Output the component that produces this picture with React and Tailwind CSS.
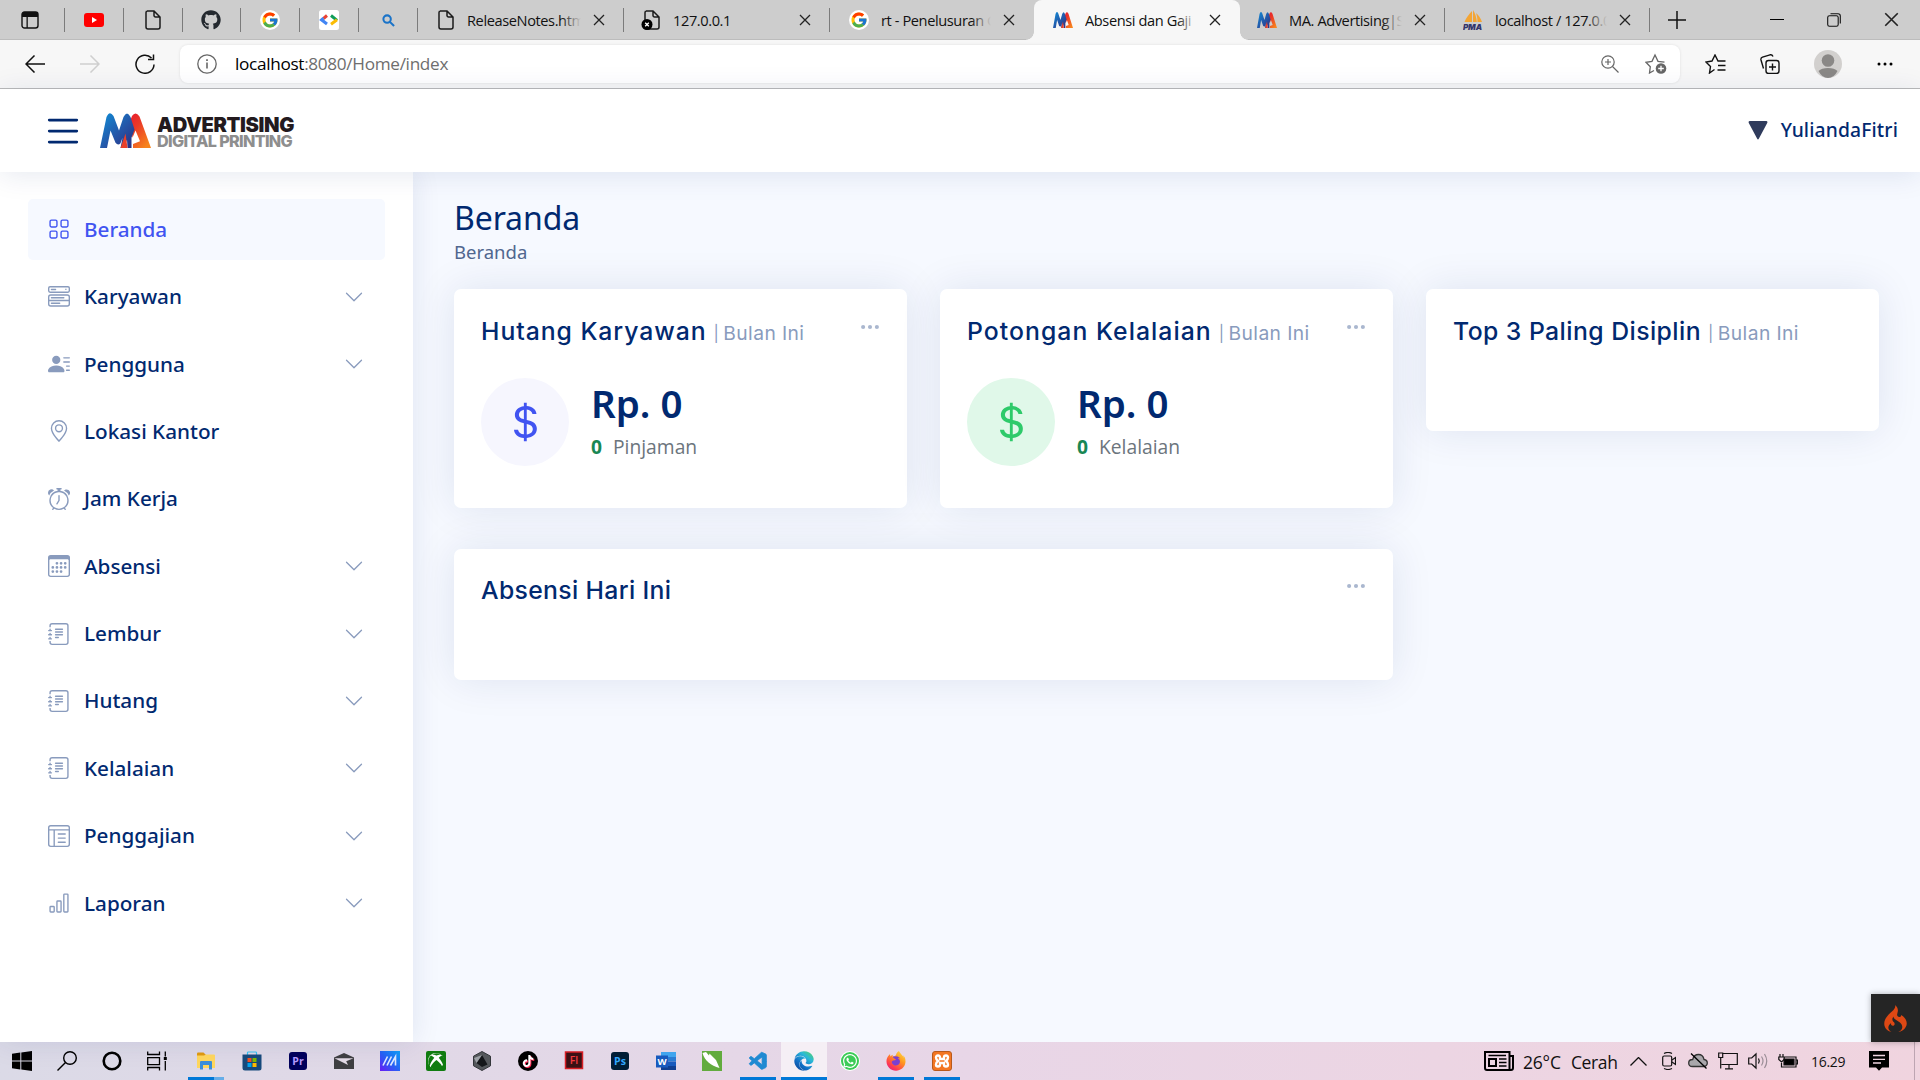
import {
  BsGrid, BsMenuButtonWide, BsPersonLinesFill, BsGeoAlt, BsAlarm, BsCalendar3, BsJournalText,
  BsLayoutTextWindowReverse, BsBarChart, BsChevronDown, BsThreeDots, BsCurrencyDollar, BsList,
} from "react-icons/bs";
import { FcGoogle } from "react-icons/fc";
import { FaGithub, FaWhatsapp, FaXbox, FaEdge, FaFirefoxBrowser, FaTiktok } from "react-icons/fa";
import { SiCodeigniter } from "react-icons/si";
import { VscVscode } from "react-icons/vsc";

/* ---------- Logos ---------- */

function MaMark({ className, id }) {
  return (
    <svg viewBox="0 0 51 34" preserveAspectRatio="none" className={className}>
      <defs>
        <linearGradient id={id + "b"} x1="0" y1="0" x2="1" y2="1">
          <stop offset="0" stopColor="#0f8fd8" />
          <stop offset="0.55" stopColor="#2456a8" />
          <stop offset="1" stopColor="#2b2a7c" />
        </linearGradient>
        <linearGradient id={id + "r"} x1="0" y1="0" x2="0.7" y2="1">
          <stop offset="0" stopColor="#e81c2e" />
          <stop offset="0.4" stopColor="#ea3a28" />
          <stop offset="1" stopColor="#f7841d" />
        </linearGradient>
      </defs>
      <path d="M30 8 32 3Q35.500-2.500 39.500 3.500L51 34H33V30L40 27.500 35.500 17 32.500 24Z" fill={`url(#${id}r)`} />
      <path d="M0 34 6.500 4Q9.500-3 13.500 3L19 17 23.500 4Q27-3 30.500 4L34.500 16 31.500 24V34H27.500L27 26 24.500 33 20.500 34 22.500 24 20.500 29.500Q18 32 15.500 29L10.500 17 7 34Z" fill={`url(#${id}b)`} />
      <path d="M20.500 34 25.500 20 27.500 34Z" fill="#e8402a" />
    </svg>
  );
}

function PageIcon({ error }) {
  return (
    <svg viewBox="0 0 18 20" className="h-5 w-[18px] shrink-0 overflow-visible" fill="none" stroke="#1b1b1b" strokeWidth="1.5">
      <path d="M3 1h7l6 6v10a2 2 0 0 1-2 2H4a2 2 0 0 1-2-2V2.500A1.500 1.500 0 0 1 3.500 1M10 1v4.500A1.500 1.500 0 0 0 11.500 7H16" />
      {error && (
        <>
          <circle cx="4" cy="14.500" r="5.500" fill="#000" stroke="none" />
          <path d="m2.200 12.700 3.600 3.600m0-3.600-3.600 3.600" stroke="#fff" strokeWidth="1.300" />
        </>
      )}
    </svg>
  );
}

const GoogleIcon = () => (
  <span className="flex size-5 shrink-0 items-center justify-center rounded-full bg-white"><FcGoogle size={18} /></span>
);

const PmaIcon = () => (
  <svg viewBox="0 0 20 20" className="-ml-px size-5 shrink-0">
    <path d="M9 12V1C6 4 3 8 1.500 12ZM10 12V0c2 3 3.500 7 3.800 12ZM14.500 12c0-3-.4-6-1.500-9 2.500 2 5 5.500 6 9Z" fill="#f4a534" />
    <text x="0" y="19.500" fontSize="8" fontWeight="900" fontStyle="italic" fontFamily="Inter, sans-serif" fill="#34356b" textLength="19">PMA</text>
  </svg>
);

/* ---------- Browser chrome ---------- */

function CloseX({ className = "size-[12px]" }) {
  return (
    <svg viewBox="0 0 12 12" className={className} stroke="#222" strokeWidth="1.300">
      <path d="m1 1 10 10M11 1 1 11" />
    </svg>
  );
}

const PINNED = [
  <svg viewBox="0 0 18 18" className="size-[18px]"><rect x="1" y="1" width="16" height="16" rx="2.500" fill="none" stroke="#111" strokeWidth="1.400" /><path d="M1 3.500Q1 1 3.500 1h11Q17 1 17 3.500V6H1ZM5.500 6h1.300v11H5.500Z" fill="#111" /></svg>,
  <svg viewBox="0 0 20 14" className="h-[14px] w-5"><rect width="20" height="14" rx="3" fill="#f00" /><path d="M8 4v6l5-3Z" fill="#fff" /></svg>,
  <PageIcon />,
  <FaGithub size={20} color="#24292f" />,
  <GoogleIcon />,
  <svg viewBox="0 0 20 20" className="size-5"><rect width="20" height="20" rx="2.500" fill="#fff" /><g fill="none" strokeWidth="3"><path d="M8 5.500 4.500 8.500" stroke="#ea4335" /><path d="M4.500 8 2.500 9.800 8 14" stroke="#4285f4" /><path d="m12 5.500 6 4.800" stroke="#0f9d58" /><path d="m18 9.800-6 4.400" stroke="#fbbc04" /></g></svg>,
  <svg viewBox="0 0 14 14" className="size-[13px]" fill="none" stroke="#1a73c8" strokeWidth="2.200"><circle cx="5.500" cy="5.500" r="4" /><path d="m8.500 8.500 4.500 4.500" /></svg>,
];

function Tab({ icon, title, active, width, sep = true }) {
  return (
    <div className={"relative flex h-10 shrink-0 items-center pl-[19px] pr-[19px] " + width + (active ? " z-10 rounded-t-lg bg-[#f7f7f7]" : " border-b border-[#bcbcbc]")}>
      {active && <span className="absolute -left-2 bottom-0 size-2 bg-[radial-gradient(circle_at_0_0,#cdcdcd_7.5px,#f7f7f7_8px)]" />}
      {active && <span className="absolute -right-2 bottom-0 size-2 bg-[radial-gradient(circle_at_100%_0,#cdcdcd_7.5px,#f7f7f7_8px)]" />}
      {icon}
      <span className="relative ml-3 flex-1 overflow-hidden whitespace-nowrap text-[14.6px] leading-5 tracking-[-0.4px] text-[#111]">
        {title}
        <span className={"absolute inset-y-0 right-0 w-5 bg-linear-to-r from-transparent " + (active ? "to-[#f7f7f7]" : "to-[#cdcdcd]")} />
      </span>
      <span className="ml-3"><CloseX /></span>
      {sep && <span className="absolute right-0 top-2 h-6 w-px bg-[#7b7b7b]" />}
    </div>
  );
}

function TabStrip() {
  return (
    <div className="flex h-10 bg-[#cdcdcd]">
      <div className="flex w-[418px] shrink-0 border-b border-[#bcbcbc]">
        {PINNED.map((icon, i) => (
          <div key={i} className={"flex h-10 items-center " + (i === 0 ? "w-[65px]" : "w-[59px]")}>
            <span className={"flex flex-1 justify-center " + (i === 0 ? "pr-1" : "")}>{icon}</span>
            <span className="h-6 w-px bg-[#7b7b7b]" />
          </div>
        ))}
      </div>
      <Tab width="w-[206px]" icon={<PageIcon />} title="ReleaseNotes.html" />
      <Tab width="w-[206px]" icon={<PageIcon error />} title="127.0.0.1" />
      <Tab width="w-[204px]" icon={<GoogleIcon />} title="rt - Penelusuran Google" sep={false} />
      <Tab width="w-[206px]" active sep={false} icon={<MaMark id="t1" className="h-4 w-5 shrink-0" />} title="Absensi dan Gaji" />
      <Tab width="w-[205px]" icon={<MaMark id="t2" className="-ml-0.5 h-4 w-5 shrink-0" />} title="MA. Advertising|Sistem" />
      <Tab width="w-[205px]" icon={<PmaIcon />} title="localhost / 127.0.0.1" />
      <div className="flex flex-1 items-center border-b border-[#bcbcbc] pl-[18px] pr-[21px]">
        <svg viewBox="0 0 18 18" className="size-[18px]" stroke="#111" strokeWidth="1.500"><path d="M9 0v18M0 9h18" /></svg>
        <div className="ml-auto flex items-center gap-[43px]">
          <span className="h-px w-[14px] bg-black" />
          <svg viewBox="0 0 14 14" className="size-[14px]" fill="none" stroke="#111" strokeWidth="1.100"><rect x="0.700" y="2.800" width="10.500" height="10.500" rx="1.800" /><path d="M3.500.7h7.500a2.300 2.300 0 0 1 2.300 2.300v7.500" /></svg>
          <CloseX className="size-[15px]" />
        </div>
      </div>
    </div>
  );
}

function Toolbar() {
  return (
    <div className="flex h-[49px] items-center border-b border-[#b9b9b9] bg-[#f7f7f7] pl-[25px] pr-[27px] pb-px">
      <svg viewBox="0 0 20 18" className="h-[18px] w-5" fill="none" stroke="#111" strokeWidth="1.500"><path d="M20 9H1M9.500.5 1 9l8.500 8.500" /></svg>
      <svg viewBox="0 0 20 18" className="ml-[35px] h-[18px] w-5" fill="none" stroke="#cfcfcf" strokeWidth="1.500"><path d="M0 9h19M10.500.5 19 9l-8.500 8.500" /></svg>
      <svg viewBox="0 0 20 20" className="ml-[35px] size-5" fill="none" stroke="#111" strokeWidth="1.500"><path d="M19 10.500A9 9 0 1 1 16.500 4M18.500.5V5.500H13" /></svg>
      <div className="ml-[25px] flex h-[38px] w-[1500px] items-center rounded-lg bg-white pl-[17px] pr-[13px] shadow-[0_0_3px_rgba(0,0,0,0.1)]">
        <svg viewBox="0 0 20 20" className="size-5" fill="none" stroke="#666" strokeWidth="1.300"><circle cx="10" cy="10" r="9.200" /><path d="M10 8.500v6" strokeWidth="1.600" /><path d="M10 5.300v1.700" strokeWidth="1.700" /></svg>
        <span className="ml-[18px] text-[17.2px] leading-6 tracking-[-0.32px] text-[#6e6e6e]"><span className="text-black">localhost</span>:8080/Home/index</span>
        <svg viewBox="0 0 18 18" className="ml-auto size-[18px]" fill="none" stroke="#666" strokeWidth="1.200"><circle cx="7" cy="7" r="6.200" /><path d="m11.500 11.500 6 6M7 4v6M4 7h6" /></svg>
        <svg viewBox="0 0 22 21" className="ml-[26px] h-[21px] w-[22px]" fill="none" stroke="#666" strokeWidth="1.300"><path d="M9 17.500 4.500 20l.8-6.200L1 9.300l6-1L10 2l3 6.300 6.500.9" /><circle cx="16" cy="15.500" r="5.300" fill="#666" stroke="none" /><path d="M16 12.700v5.600m-2.800-2.800h5.600" stroke="#fff" /></svg>
      </div>
      <svg viewBox="0 0 21 20" className="ml-[25px] h-5 w-[21px]" fill="none" stroke="#111" strokeWidth="1.400"><path d="M9.500 15.500 4.500 19l1-6.500L1 8l6-1 3-6 3 6h7.500M13 11.500h7.500M12.500 16h8" /></svg>
      <svg viewBox="0 0 20 20" className="ml-[34px] size-5" fill="none" stroke="#111" strokeWidth="1.400"><rect x="6" y="6.500" width="13" height="13" rx="2.500" /><path d="M12.500 9.500v7M9 13h7M3.500 14.500 1 6Q.5 4 2.500 3.200L10 .8q2-.5 3 1.700" /></svg>
      <svg viewBox="0 0 28 28" className="ml-[34px] size-7"><circle cx="14" cy="14" r="14" fill="#d2d0ce" /><circle cx="14" cy="10.500" r="6.300" fill="#8a8886" /><path d="M4.500 21q3-3 9.500-3t9.500 3q-3.500 7-9.500 7t-9.500-7" fill="#8a8886" /></svg>
      <svg viewBox="0 0 16 4" className="ml-[35px] h-1 w-4"><circle cx="2" cy="2" r="1.500" /><circle cx="8" cy="2" r="1.500" /><circle cx="14" cy="2" r="1.500" /></svg>
    </div>
  );
}

/* ---------- Application ---------- */

function Header() {
  return (
    <header className="relative z-20 flex h-[83px] items-center bg-white pl-[41px] pr-[22px] shadow-[0_3px_27px_rgba(1,41,112,0.1)]">
      <BsList size={44} color="#012970" />
      <MaMark id="h" className="ml-[15px] h-[35px] w-[51px]" />
      <div className="ml-[6px] mt-1 flex flex-col whitespace-nowrap font-[Inter]">
        <span className="text-[20.2px] font-black leading-[17px] tracking-[-0.4px] text-[#231a1e]">ADVERTISING</span>
        <span className="text-[16.2px] font-extrabold leading-[17px] tracking-[-0.7px] text-[#8e8e8e]">DIGITAL PRINTING</span>
      </div>
      <svg viewBox="0 0 20 20" className="ml-auto h-[19px] w-5"><path d="M1.500 0h17q2 0 1.200 2L11 18.500q-1 2-2 0L.3 2Q-.4 0 1.500 0" fill="#2f3b5c" /></svg>
      <span className="ml-[13px] font-['Noto_Sans'] text-[19.25px] font-medium tracking-[0.15px] text-[#012970]">YuliandaFitri</span>
    </header>
  );
}

const MENU = [
  ["Beranda", BsGrid, false],
  ["Karyawan", BsMenuButtonWide, true],
  ["Pengguna", BsPersonLinesFill, true],
  ["Lokasi Kantor", BsGeoAlt, false],
  ["Jam Kerja", BsAlarm, false],
  ["Absensi", BsCalendar3, true],
  ["Lembur", BsJournalText, true],
  ["Hutang", BsJournalText, true],
  ["Kelalaian", BsJournalText, true],
  ["Penggajian", BsLayoutTextWindowReverse, true],
  ["Laporan", BsBarChart, true],
];

function Sidebar() {
  return (
    <aside className="relative z-10 flex w-[413px] shrink-0 flex-col gap-[6.875px] bg-white pl-7 pr-7 pt-[27px] shadow-[0_0_27px_rgba(1,41,112,0.1)]">
      {MENU.map(([label, Icon, sub], i) => (
        <a key={label} className={"flex h-[60.5px] items-center rounded-[5px] pl-5 pr-[21px] " + (i === 0 ? "bg-[#f6f9ff] text-[#4154f1]" : "text-[#012970]")}>
          <Icon size={22} className={i === 0 ? "text-[#4154f1]" : "text-[#899bbd]"} />
          <span className="-mt-px ml-[14px] font-['Noto_Sans'] text-[20.7px] font-medium leading-[30px]">{label}</span>
          {sub && <BsChevronDown size={20} className="ml-auto text-[#899bbd]" />}
        </a>
      ))}
    </aside>
  );
}

function Card({ title, tracking, note, dots, className = "", children }) {
  return (
    <section className={"rounded-[7px] bg-white px-[27px] shadow-[0_0_41px_rgba(1,41,112,0.1)] " + className}>
      <div className="flex items-start whitespace-nowrap font-[Inter]">
        <h5 className={"text-[24.75px] font-medium leading-[30px] text-[#012970] " + tracking}>
          {title}
          {note && (
            <span className="ml-[7px] text-[19.25px] font-normal tracking-[0.4px] text-[#899bbd]">
              <span className="mr-1 inline-block align-[1px] text-[16px] leading-none">|</span>{note}
            </span>
          )}
        </h5>
        {dots && <BsThreeDots size={22} className="-mr-px ml-auto text-[#aab7cf]" />}
      </div>
      {children}
    </section>
  );
}

function Stat({ tone, label }) {
  return (
    <div className="mt-[30px] flex">
      <div className={"flex size-[88px] items-center justify-center rounded-full " + tone}><BsCurrencyDollar size={44} /></div>
      <div className="ml-[22px] whitespace-nowrap">
        <div className="mt-0.5 font-['Noto_Sans'] text-[38.5px] font-semibold leading-[46px] text-[#012970]">Rp. 0</div>
        <div className="mt-1.5 text-[19.25px] leading-[29px] text-[#6c757d]"><b className="mr-[11px] font-bold text-[#198754]">0</b>{label}</div>
      </div>
    </div>
  );
}

function Main() {
  return (
    <main className="relative flex flex-1 flex-col bg-[#f6f9ff] pl-[41px] pr-[41px] pt-[29px]">
      <h1 className="font-['Noto_Sans'] text-[32px] font-[450] leading-[33px] tracking-[-0.1px] text-[#012970]">Beranda</h1>
      <p className="mt-1 font-['Noto_Sans'] text-[18.5px] font-[450] leading-7 text-[#51678f]">Beranda</p>
      <div className="mt-[23px] grid grid-cols-3 items-start gap-x-[33px] gap-y-[41px]">
        <Card title="Hutang Karyawan" tracking="tracking-[0.95px]" note="Bulan Ini" dots className="h-[219px] pt-[27px]"><Stat tone="bg-[#f6f6fe] text-[#4154f1]" label="Pinjaman" /></Card>
        <Card title="Potongan Kelalaian" tracking="tracking-[1.05px]" note="Bulan Ini" dots className="h-[219px] pt-[27px]"><Stat tone="bg-[#e0f8e9] text-[#2eca6a]" label="Kelalaian" /></Card>
        <Card title="Top 3 Paling Disiplin" tracking="tracking-[0.45px]" note="Bulan Ini" className="h-[142px] pt-[27px]" />
        <Card title="Absensi Hari Ini" tracking="tracking-[0.35px]" dots className="col-span-2 h-[131px] pt-[26px]" />
      </div>
      <div className="absolute bottom-0 right-0 flex h-12 w-[49px] items-center justify-center bg-[#252525] shadow-[0_0_6px_rgba(0,0,0,0.3)]">
        <SiCodeigniter size={27} color="#dd4814" />
      </div>
    </main>
  );
}

/* ---------- Taskbar ---------- */

function AppTile({ bg, fg, children }) {
  return (
    <svg viewBox="0 0 20 20" className="size-5">
      <rect x="1" y="1" width="18" height="18" rx="3" fill={bg} />
      <text x="10" y="14" textAnchor="middle" fontSize="10.500" fontWeight="700" fontFamily="Open Sans, sans-serif" fill={fg}>{children}</text>
    </svg>
  );
}

const APPS = [
  [<svg viewBox="0 0 20 20" className="size-5"><path d="M0 2.800 8.300 1.600V9.500H0ZM9.300 1.500 20 0v9.500H9.300ZM0 10.500h8.300v7.900L0 17.200ZM9.300 10.500H20V20L9.300 18.500Z" /></svg>],
  [<svg viewBox="0 0 20 20" className="size-5" fill="none" stroke="#000" strokeWidth="1.400"><circle cx="13" cy="7" r="6.300" /><path d="M8.500 11.500.5 19.500" /></svg>],
  [<svg viewBox="0 0 20 20" className="size-5" fill="none" stroke="#000" strokeWidth="2.600"><circle cx="10" cy="10" r="8.300" /></svg>],
  [<svg viewBox="0 0 20 20" className="size-5" fill="none" stroke="#000" strokeWidth="1.300"><path d="M.7.500V3.500H12.500V.5M.7 6.700h11.800v7H.7ZM.7 19.500v-3H12.500v3M18.300.5V5.500M18.300 10v9.500" /><path d="M16.800 6h3v3h-3Z" fill="#000" stroke="none" /></svg>],
  [<svg viewBox="0 0 20 18" className="h-[18px] w-5"><path d="M1 1.500q0-1 1-1h5.500l2 2V5H1Z" fill="#e09a10" /><path d="M1 3.500h7l2-1h8q1 0 1 1V16H1Z" fill="#ffd75e" /><path d="M4 17.500V10q0-1 1-1h10q1 0 1 1v7.500h-3V13H7v4.500Z" fill="#3a8fdc" /></svg>, "half"],
  [<svg viewBox="0 0 20 20" className="size-5"><path d="M5.500 4V1.800Q5.500 1 6.300 1h7.400q.8 0 .8.800V4" fill="none" stroke="#35c1f1" strokeWidth="1.200" /><path d="M.5 3.500h19V17q0 2.500-2.500 2.500H3Q.5 19.500.5 17Z" fill="#174a7c" /><path d="M5.500 7H9.500v4h-4Z" fill="#f25022" /><path d="M10.500 7h4v4h-4Z" fill="#7fba00" /><path d="M5.500 12h4v4h-4Z" fill="#00a4ef" /><path d="M10.500 12h4v4h-4Z" fill="#ffb900" /></svg>],
  [<AppTile bg="#00005b" fg="#b39bff">Pr</AppTile>],
  [<svg viewBox="0 0 20 16" className="h-4 w-5" fill="#3f3f42"><path d="M0 4.500 10 0l10 4.500V16H0Z" /><path d="M.5 5.200 14 12l-1.800-3.800 7.300-3Z" fill="#e4dbe6" /></svg>],
  [<svg viewBox="0 0 20 20" className="size-5"><defs><linearGradient id="armoury" x1="0" y1="1" x2="1" y2="0"><stop offset="0" stopColor="#6a1bf5" /><stop offset="0.500" stopColor="#2563f5" /><stop offset="1" stopColor="#0fa0f8" /></linearGradient></defs><rect width="20" height="20" fill="url(#armoury)" /><path d="m3 14.500 4.500-9M7 14.500l4.500-9M10.500 14.500l5-9v9" stroke="#dfe9ff" strokeWidth="1.600" fill="none" /></svg>],
  [<span className="flex size-5 items-center justify-center rounded-xs bg-[#107c10]"><span className="flex size-4 items-center justify-center rounded-full bg-white"><FaXbox size={17} color="#107c10" className="shrink-0" /></span></span>],
  [<svg viewBox="0 0 20 20" className="size-5"><path d="m10 .5 8.500 4.700v9.600L10 19.500 1.500 14.800V5.200Z" fill="#55585c" stroke="#33363a" /><path d="m10 4 5.500 9.500-5.500 2.500-5.500-4Z" fill="#15171a" /><path d="M10 4 4.500 12 2 7Z" fill="#9da1a6" /></svg>],
  [<span className="flex size-5 items-center justify-center rounded-full bg-black"><FaTiktok size={12} color="#fff" className="drop-shadow-[1px_1px_0_#fe2c55]" /></span>],
  [<svg viewBox="0 0 20 20" className="size-5"><rect x="1.500" y="1" width="17" height="16.500" fill="#3a1014" stroke="#d81f26" strokeWidth="1.500" /><text x="10" y="13" textAnchor="middle" fontSize="10.500" fontWeight="600" fontFamily="Open Sans, sans-serif" fill="#f03a3e">Fl</text></svg>],
  [<AppTile bg="#001e36" fg="#31a8ff">Ps</AppTile>],
  [<svg viewBox="0 0 20 20" className="size-5"><path d="M5 1h15v5H5Z" fill="#41a5ee" /><path d="M5 6h15v4.500H5Z" fill="#2b7cd3" /><path d="M5 10.500h15V15H5Z" fill="#185abd" /><path d="M5 15h15v4H5Z" fill="#103f91" /><rect y="4.500" width="12" height="12" fill="#185abd" /><text x="6" y="14" textAnchor="middle" fontSize="9.500" fontWeight="700" fontFamily="Open Sans, sans-serif" fill="#fff">W</text></svg>],
  [<svg viewBox="0 0 20 20" className="size-5"><rect width="20" height="20" fill="#62ab3e" /><path d="M.5 2 4 1 7 4.500 7.500 2.500 14 9l3.500 8C9 15 2.500 9.500.5 2" fill="#fff" /></svg>],
  [<VscVscode size={21} color="#1f8ad2" stroke="#1f8ad2" strokeWidth={0.6} />, "on"],
  [<><svg width="0" height="0" className="absolute"><defs><linearGradient id="edge" x1="1" y1="0" x2="0.200" y2="1"><stop offset="0" stopColor="#5ad65a" /><stop offset="0.350" stopColor="#2bb9d8" /><stop offset="0.700" stopColor="#1272c8" /><stop offset="1" stopColor="#0c4a9c" /></linearGradient></defs></svg><FaEdge size={20} fill="url(#edge)" /></>, "active"],
  [<span className="flex size-5 items-center justify-center rounded-full bg-white"><span className="flex size-[18px] items-center justify-center rounded-full bg-[#3ccb56]"><FaWhatsapp size={16} color="#fff" /></span></span>],
  [<><svg width="0" height="0" className="absolute"><defs><linearGradient id="fox" x1="0.900" y1="0" x2="0.200" y2="1"><stop offset="0" stopColor="#ffe04a" /><stop offset="0.400" stopColor="#ff9a1e" /><stop offset="0.800" stopColor="#ff3a50" /><stop offset="1" stopColor="#e02080" /></linearGradient></defs></svg><span className="flex size-5 items-center justify-center rounded-full bg-[radial-gradient(circle,#7b3fd0_35%,transparent_40%)]"><FaFirefoxBrowser size={20} fill="url(#fox)" /></span></>, "on"],
  [<span className="flex size-5 items-center justify-center rounded-[3px] border border-[#b85a1c] bg-[#f37623]"><svg viewBox="0 0 16 16" className="size-4" fill="none" stroke="#fff" strokeWidth="2.400"><path d="M4 2.500Q2 2.500 2 4.500T4 8Q2 9.500 2 11.500t2 2 2-2V10h4v1.500q0 2 2 2t2-2T12 8q2-1.500 2-3.500t-2-2-2 2V6H6V4.500q0-2-2-2" /></svg></span>, "on"],
];

function Taskbar() {
  return (
    <footer className="flex h-[38px] shrink-0 items-center bg-linear-to-r from-[#dbdae7] via-[#e8d6e7] to-[#f0d4df]">
      <div className="-ml-px flex">
        {APPS.map(([icon, state], i) => (
          <div key={i} className={"relative flex h-[38px] items-center justify-center " + (i < 4 ? "w-[45px]" : "w-[46px]") + (i === 4 ? " ml-1" : "") + (state === "active" ? " bg-white/60" : "")}>
            {icon}
            {state === "active" && <span className="absolute inset-x-0 bottom-0 h-[3px] bg-[#0078d7]" />}
            {state === "on" && <span className="absolute inset-x-[5px] bottom-0 h-[3px] bg-[#0078d7]" />}
            {state === "half" && <span className="absolute inset-x-[5px] bottom-0 h-[3px] border-r-10 border-[#66ade8] bg-[#0078d7]" />}
          </div>
        ))}
      </div>
      <div className="ml-auto flex h-[38px] items-center">
        <svg viewBox="0 0 30 20" className="h-5 w-[30px]" fill="none" stroke="#000" strokeWidth="2"><path d="M1 1h24.500v16.500q0 1.500 1.500 1.500H3q-2 0-2-2ZM26 5h3v12q0 2-2 2" /><path d="M5 8h7v7H5Z" /><path d="M4.500 4.500H22M15 8h7.500M15 11.500h7.500M15 15h7.500" strokeWidth="1.400" /></svg>
        <span className="ml-[9px] mt-0.5 w-[39px] whitespace-nowrap text-[17.5px] tracking-[-0.2px] text-[#111]">26°C</span>
        <span className="ml-[9px] mt-0.5 w-[47px] text-[17.5px] tracking-[-0.4px] text-[#111]">Cerah</span>
        <svg viewBox="0 0 17 9" className="ml-[12px] h-[9px] w-[17px]" fill="none" stroke="#111" strokeWidth="1.300"><path d="m.5 8.500 8-8 8 8" /></svg>
        <svg viewBox="0 0 14 18" className="ml-[15px] h-[18px] w-[14px]" fill="none" stroke="#111" strokeWidth="1.200"><rect x="0.700" y="4" width="9" height="10" rx="1.500" /><path d="m10 8 3.500-2.500v7L10 10M2 1.500q4-2 8 0M2 16.500q4 2 8 0" /></svg>
        <svg viewBox="0 0 20 16" className="ml-3 h-4 w-5" strokeWidth="1.300"><path d="M4.500 13.500Q.7 13.500.7 10t4-3.500Q6 1.500 10.500 1.500T16 6.500q3.300.5 3.300 3.500t-3.500 3.500Z" fill="#a9a7ab" stroke="#333" /><path d="M3 .5 18.500 15.500" stroke="#000" /></svg>
        <svg viewBox="0 0 20 18" className="ml-[10px] h-[18px] w-5" fill="none" stroke="#111" strokeWidth="1.200"><path d="M5 1.500h14.300v11H3.500M11 12.500v4M7 16.800h8M.7 1h4v4.500h-4ZM2.700 5.500v11" /></svg>
        <svg viewBox="0 0 20 18" className="ml-[10px] h-[18px] w-5" fill="none" stroke="#111" strokeWidth="1.200"><path d="M.7 6h3L8 2v14L3.700 12h-3ZM10.500 6.500q1.500 2.500 0 5" /><path d="M13.500 4.500q3 4.500 0 9M16.500 2q4.500 7 0 14" stroke="#9a8d96" /></svg>
        <svg viewBox="0 0 20 14" className="ml-[10px] h-[14px] w-5" fill="none" stroke="#111" strokeWidth="1.200"><path d="M6 3h12v10H3.500V9M18.500 6h1v4h-1M2 0v3M5 0v3M.8 3h5.400v2.500L3.500 8 .8 5.500Z" /><path d="M6 5h10v6H6Z" fill="#000" /></svg>
        <span className="ml-[13px] w-[36px] text-[14px] tracking-[-0.3px] text-[#111]">16.29</span>
        <svg viewBox="0 0 20 20" className="ml-[22px] size-5"><path d="M0 0h20v16.500h-7L10 19.800 7 16.500H0Z" /><path d="M4 4.500h12M4 8.300h12M4 12h8" stroke="#eed4e0" strokeWidth="1.300" /></svg>
        <span className="ml-[25px] mr-[5px] h-[38px] w-px bg-[#bda5b2]" />
      </div>
    </footer>
  );
}

export default function App() {
  return (
    <div className="flex h-[1080px] w-[1920px] flex-col overflow-hidden bg-white font-['Open_Sans']">
      <TabStrip />
      <Toolbar />
      <Header />
      <div className="flex min-h-0 flex-1">
        <Sidebar />
        <Main />
      </div>
      <Taskbar />
    </div>
  );
}
